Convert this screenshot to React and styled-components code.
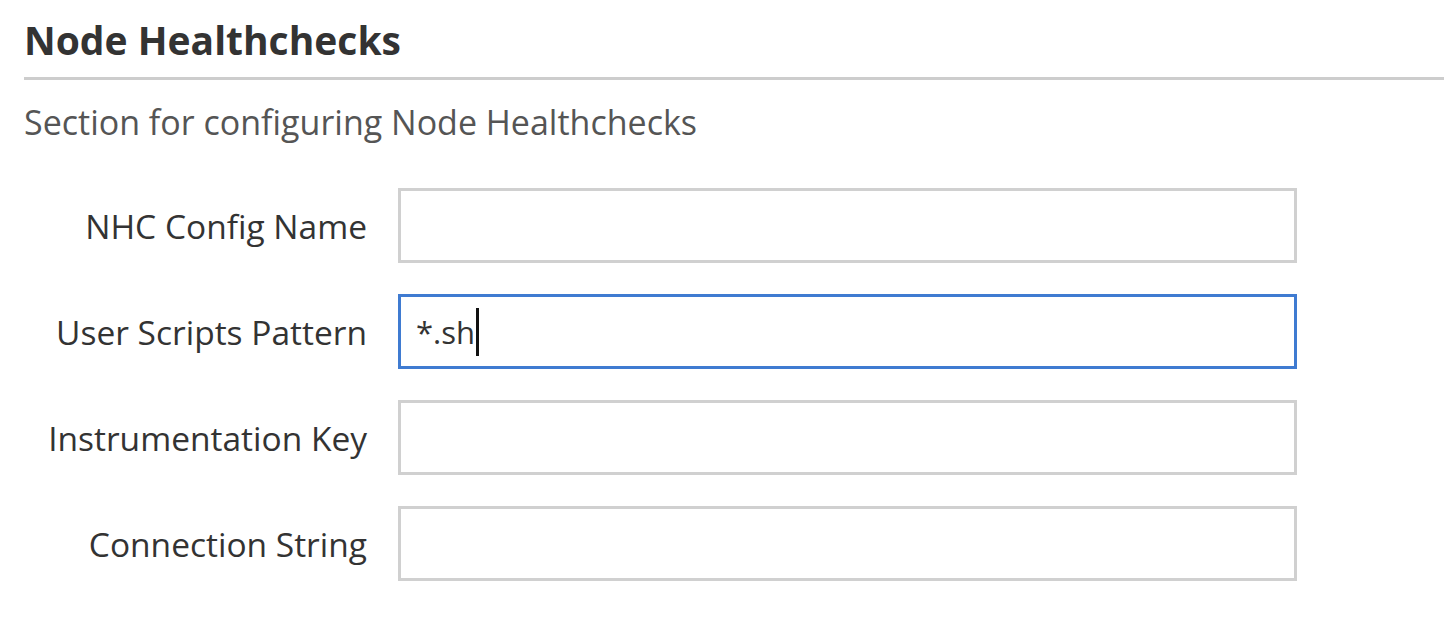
import React from 'react';
import styled, { createGlobalStyle } from 'styled-components';

const GlobalStyle = createGlobalStyle`
  body {
    margin: 0;
    background: #fff;
    font-family: "Open Sans", "Noto Sans", sans-serif;
  }
`;

const Section = styled.section`
  padding: 14px 0 0 24px;
`;

const Title = styled.h2`
  margin: 0;
  padding-bottom: 11px;
  font-size: 39px;
  font-weight: 700;
  line-height: 52px;
  color: #333;
  border-bottom: 3px solid #cdcdcd;
`;

const Description = styled.p`
  margin: 20px 0 0;
  font-size: 34px;
  line-height: 44px;
  color: #555;
`;

const Form = styled.div`
  display: flex;
  flex-direction: column;
  gap: 31px;
  margin-top: 44px;
`;

const Row = styled.div`
  display: grid;
  grid-template-columns: 343px 899px;
  column-gap: 31px;
  align-items: center;
`;

const Label = styled.label`
  text-align: right;
  font-size: 33.5px;
  color: #333;
`;

const Field = styled.div`
  box-sizing: border-box;
  height: 75px;
  border: 3px solid ${(p) => (p.$focused ? '#3f7bd1' : '#d0d0d0')};
  padding: 0 15px;
  display: flex;
  align-items: center;
  font-size: 31px;
  color: #333;
`;

const Caret = styled.span`
  display: inline-block;
  width: 3px;
  height: 48px;
  margin-left: 1px;
  background: #111;
`;

const fields = [
  { label: 'NHC Config Name', value: '' },
  { label: 'User Scripts Pattern', value: '*.sh', focused: true },
  { label: 'Instrumentation Key', value: '' },
  { label: 'Connection String', value: '' },
];

export default function App() {
  return (
    <>
      <GlobalStyle />
      <Section>
        <Title>Node Healthchecks</Title>
        <Description>Section for configuring Node Healthchecks</Description>
        <Form>
          {fields.map((f) => (
            <Row key={f.label}>
              <Label>{f.label}</Label>
              <Field $focused={f.focused}>
                {f.value}
                {f.focused && <Caret />}
              </Field>
            </Row>
          ))}
        </Form>
      </Section>
    </>
  );
}
